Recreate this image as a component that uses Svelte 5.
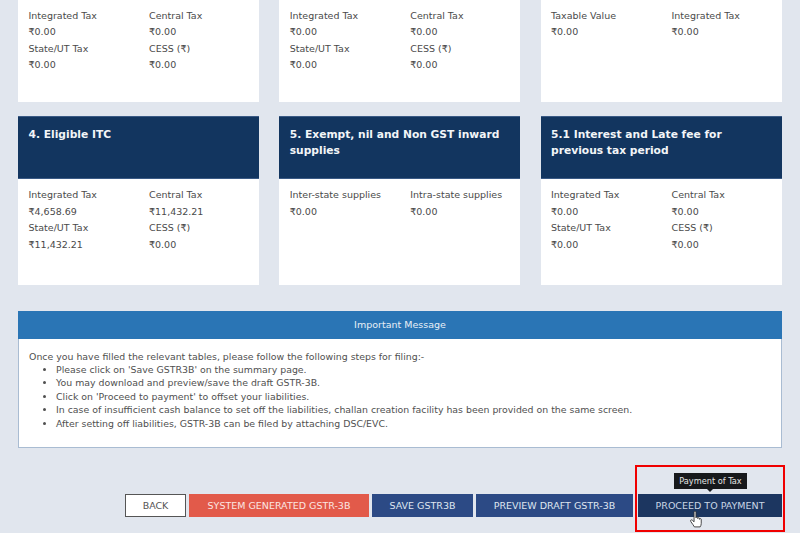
<script lang="ts">
  type Field = { label: string; value: string };
  type Card = { title?: string; fields: Field[] };

  const taxes = (igst: string, cgst: string, sgst: string, cess: string): Field[] => [
    { label: "Integrated Tax", value: igst },
    { label: "Central Tax", value: cgst },
    { label: "State/UT Tax", value: sgst },
    { label: "CESS (₹)", value: cess },
  ];

  const zero = "₹0.00";

  const topCards: Card[] = [
    { fields: taxes(zero, zero, zero, zero) },
    { fields: taxes(zero, zero, zero, zero) },
    { fields: [{ label: "Taxable Value", value: zero }, { label: "Integrated Tax", value: zero }] },
  ];

  const cards: Card[] = [
    { title: "4. Eligible ITC", fields: taxes("₹4,658.69", "₹11,432.21", "₹11,432.21", zero) },
    {
      title: "5. Exempt, nil and Non GST inward supplies",
      fields: [{ label: "Inter-state supplies", value: zero }, { label: "Intra-state supplies", value: zero }],
    },
    { title: "5.1 Interest and Late fee for previous tax period", fields: taxes(zero, zero, zero, zero) },
  ];

  const steps = [
    "Please click on 'Save GSTR3B' on the summary page.",
    "You may download and preview/save the draft GSTR-3B.",
    "Click on 'Proceed to payment' to offset your liabilities.",
    "In case of insufficient cash balance to set off the liabilities, challan creation facility has been provided on the same screen.",
    "After setting off liabilities, GSTR-3B can be filed by attaching DSC/EVC.",
  ];
</script>

{#snippet fieldGrid(fields: Field[])}
  <div class="fields">
    {#each fields as f}
      <div class="field">
        <span>{f.label}</span>
        <span>{f.value}</span>
      </div>
    {/each}
  </div>
{/snippet}

<div class="page">
  <section class="row row-top">
    {#each topCards as c}
      <article class="card">{@render fieldGrid(c.fields)}</article>
    {/each}
  </section>

  <section class="row row-main">
    {#each cards as c}
      <article class="card">
        <h3>{c.title}</h3>
        {@render fieldGrid(c.fields)}
      </article>
    {/each}
  </section>

  <section class="message">
    <header>Important Message</header>
    <div class="message-body">
      <p>Once you have filled the relevant tables, please follow the following steps for filing:-</p>
      <ul>
        {#each steps as s}
          <li>{s}</li>
        {/each}
      </ul>
    </div>
  </section>

  <div class="actions">
    <button class="back">BACK</button>
    <button class="red">SYSTEM GENERATED GSTR-3B</button>
    <button class="blue save">SAVE GSTR3B</button>
    <button class="blue preview">PREVIEW DRAFT GSTR-3B</button>
    <button class="proceed">
      PROCEED TO PAYMENT
      <span class="tooltip">Payment of Tax</span>
      <svg class="cursor" viewBox="1 0.6 11.4 15.4" width="13" height="17" aria-hidden="true">
        <path
          d="M4.5 1.6c0-1 1.7-1 1.700 0v5.200c0-.9 1.600-.9 1.600 0v.6c0-.9 1.600-.9 1.600 0v.7c0-.8 1.600-.8 1.600.1v3.600c0 1.400-.4 2.200-1 3.200H4.800C4 13.600 2.800 12 1.500 10.100c-.7-1 .5-2 1.400-1.200l1.600 1.500z"
          fill="#fff"
          stroke="#333"
          stroke-width="0.8"
          stroke-linejoin="round"
        />
      </svg>
    </button>
    <div class="highlight"></div>
  </div>
</div>

<style>
  :global(body) {
    margin: 0;
    background: #e1e6ee;
  }

  .page {
    box-sizing: border-box;
    width: 800px;
    height: 533px;
    overflow: hidden;
    padding: 0 18px;
    font-family: "DejaVu Sans", Verdana, sans-serif;
    font-size: 9.500px;
    color: #4a4a4a;
  }

  .row {
    display: grid;
    grid-template-columns: repeat(3, 241px);
    column-gap: 20.250px;
  }
  .row-top {
    height: 102px;
  }
  .row-main {
    margin-top: 14px;
    height: 169px;
  }

  .card {
    background: #fff;
    display: flex;
    flex-direction: column;
  }

  .card h3 {
    box-sizing: border-box;
    margin: 0;
    height: 63px;
    padding: 9.500px 10.500px 0;
    background: #12355f;
    border: 1px solid #3a5a85;
    border-left: 0;
    border-right: 0;
    color: #f2f5f8;
    font-size: 10.700px;
    font-weight: 700;
    line-height: 16px;
  }

  .fields {
    display: grid;
    grid-template-columns: 120.500px 1fr;
    padding: 8px 10.500px 0;
  }
  .row-top .fields {
    padding-top: 7.500px;
  }
  .field {
    display: grid;
    grid-template-rows: 16.500px 16.500px;
    line-height: 16.500px;
    white-space: nowrap;
  }

  .message {
    box-sizing: border-box;
    height: 137px;
    margin-top: 26px;
    background: #fff;
    border: 1px solid #a9bcd2;
    border-top: 0;
  }
  .message header {
    height: 28px;
    margin: 0 -1px;
    background: #2a75b5;
    color: #e8eff6;
    text-align: center;
    line-height: 28px;
  }
  .message-body {
    padding: 10.500px 10px 0;
    font-size: 9.400px;
    line-height: 13.400px;
    color: #505050;
  }
  .message-body p {
    margin: 0;
  }
  .message-body ul {
    margin: 0;
    padding-left: 27px;
  }

  .actions {
    position: relative;
    display: flex;
    justify-content: flex-end;
    gap: 3px;
    margin-top: 46px;
    height: 23px;
  }

  button {
    box-sizing: border-box;
    height: 23px;
    padding: 0;
    border: 1px solid transparent;
    font-family: inherit;
    font-size: 9.500px;
    color: #dfe6f0;
    white-space: nowrap;
  }
  .back {
    width: 61px;
    background: #fff;
    border-color: #555;
    color: #555;
  }
  .red {
    width: 180px;
    background: #e25a4a;
    color: #fbe6e2;
  }
  .blue {
    background: #2c4a85;
  }
  .save {
    width: 101px;
  }
  .preview {
    width: 157px;
  }
  .proceed {
    position: relative;
    width: 144px;
    margin-left: 2px;
    background: #1c3660;
    color: #c9d6e6;
  }

  .tooltip {
    position: absolute;
    left: 35px;
    top: -22px;
    width: 73px;
    height: 16px;
    background: #17191c;
    color: #e4e4e4;
    font-size: 8.200px;
    line-height: 16px;
    text-align: center;
  }
  .tooltip::after {
    content: "";
    position: absolute;
    left: 33px;
    bottom: -3px;
    border-left: 3px solid transparent;
    border-right: 3px solid transparent;
    border-top: 3px solid #17191c;
  }

  .cursor {
    position: absolute;
    left: 51px;
    top: 16px;
  }

  .highlight {
    position: absolute;
    right: -3px;
    top: -29px;
    width: 150px;
    height: 67px;
    box-sizing: border-box;
    border: 2px solid #f00000;
    pointer-events: none;
  }
</style>
